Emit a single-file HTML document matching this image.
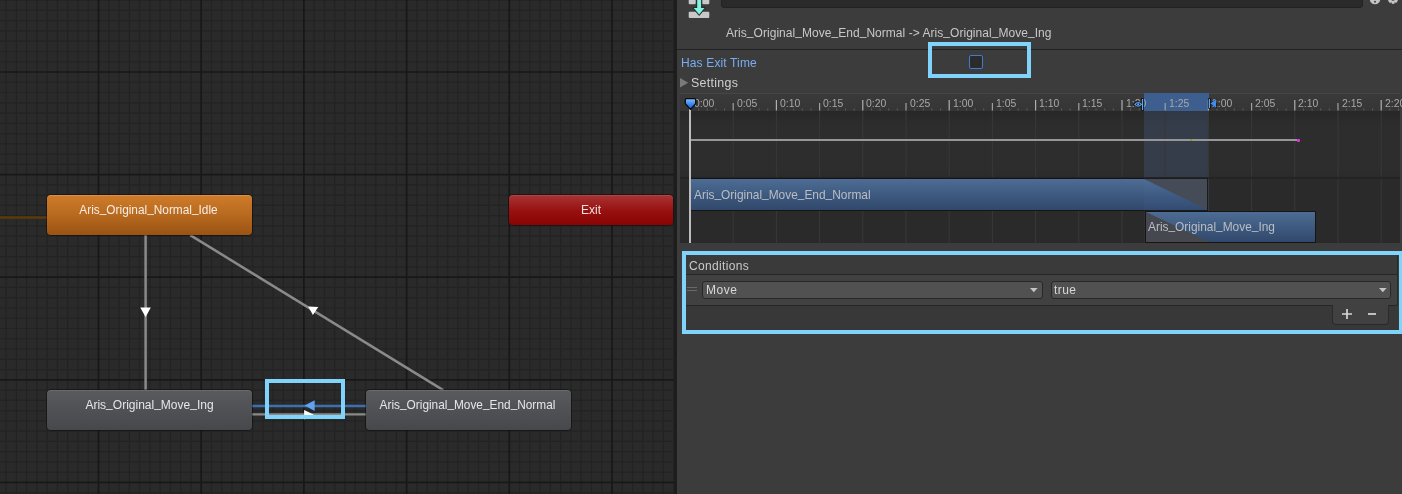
<!DOCTYPE html>
<html><head><meta charset="utf-8">
<style>
*{box-sizing:border-box;margin:0;padding:0}
html,body{width:1402px;height:494px;overflow:hidden;background:#3c3c3c;font-family:"Liberation Sans",sans-serif;}
.abs{position:absolute}
.t{position:absolute;white-space:pre;line-height:1;will-change:transform}
.u{position:relative;top:-2px}
</style></head><body>
<!-- GRAPH -->
<div class="abs" style="left:0;top:0;width:677px;height:494px;background:#2a2a2a;overflow:hidden">
<svg width="677" height="494" style="position:absolute;left:0;top:0">
<rect x="0" y="0" width="677" height="494" fill="#2a2a2a"/><path d="M6.07 0V494M16.34 0V494M26.61 0V494M36.88 0V494M47.15 0V494M57.42 0V494M67.69 0V494M77.96 0V494M88.23 0V494M108.77 0V494M119.04 0V494M129.31 0V494M139.58 0V494M149.85 0V494M160.12 0V494M170.39 0V494M180.66 0V494M190.93 0V494M211.47 0V494M221.74 0V494M232.01 0V494M242.28 0V494M252.55 0V494M262.82 0V494M273.09 0V494M283.36 0V494M293.63 0V494M314.17 0V494M324.44 0V494M334.71 0V494M344.98 0V494M355.25 0V494M365.52 0V494M375.79 0V494M386.06 0V494M396.33 0V494M416.87 0V494M427.14 0V494M437.41 0V494M447.68 0V494M457.95 0V494M468.22 0V494M478.49 0V494M488.76 0V494M499.03 0V494M519.57 0V494M529.84 0V494M540.11 0V494M550.38 0V494M560.65 0V494M570.92 0V494M581.19 0V494M591.46 0V494M601.73 0V494M622.27 0V494M632.54 0V494M642.81 0V494M653.08 0V494M663.35 0V494M673.62 0V494M0 0.18H676M0 10.44H676M0 20.70H676M0 30.96H676M0 41.22H676M0 51.48H676M0 61.74H676M0 82.26H676M0 92.52H676M0 102.78H676M0 113.04H676M0 123.30H676M0 133.56H676M0 143.82H676M0 154.08H676M0 164.34H676M0 184.86H676M0 195.12H676M0 205.38H676M0 215.64H676M0 225.90H676M0 236.16H676M0 246.42H676M0 256.68H676M0 266.94H676M0 287.46H676M0 297.72H676M0 307.98H676M0 318.24H676M0 328.50H676M0 338.76H676M0 349.02H676M0 359.28H676M0 369.54H676M0 390.06H676M0 400.32H676M0 410.58H676M0 420.84H676M0 431.10H676M0 441.36H676M0 451.62H676M0 461.88H676M0 472.14H676M0 492.66H676" stroke="#232323" stroke-width="1.2" fill="none"/><path d="M98.50 0V494M201.20 0V494M303.90 0V494M406.60 0V494M509.30 0V494M612.00 0V494M0 72.00H676M0 174.60H676M0 277.20H676M0 379.80H676M0 482.40H676" stroke="#181818" stroke-width="1.7" fill="none"/>
<!-- orange line -->
<line x1="0" y1="217.4" x2="48" y2="217.4" stroke="#5a3b08" stroke-width="2.5"/>
<!-- vertical transition -->
<line x1="145.6" y1="234" x2="145.6" y2="391" stroke="#8a8a8a" stroke-width="2.5"/>
<polygon points="140.2,307.4 150.8,307.4 145.6,317.1" fill="#ffffff"/>
<!-- diagonal -->
<line x1="190.2" y1="235.1" x2="443.2" y2="390.1" stroke="#8a8a8a" stroke-width="2.5"/>
<polygon points="308.2,306.5 318.3,307.1 312.9,314.9" fill="#ffffff"/>
<!-- blue & gray horizontal -->
<line x1="251" y1="405.9" x2="367" y2="405.9" stroke="#3f6fae" stroke-width="2.5"/>
<line x1="251" y1="414.4" x2="367" y2="414.4" stroke="#8a8a8a" stroke-width="2.3"/>
<polygon points="304.6,405.6 314.7,400.3 314.7,410.9" fill="#5fa2f0"/>
<polygon points="304.1,409.9 313.9,414.7 304.1,419.5" fill="#ffffff"/>
</svg>
<!-- nodes -->
<div class="abs" style="left:47px;top:195px;width:205px;height:40px;border-radius:4px;background:linear-gradient(#d07b29,#b76a1f 50%,#9b5313);box-shadow:0 0 0 1px rgba(0,0,0,0.35),inset 0 1px 0 rgba(255,210,150,0.25)"></div>
<div class="t" style="left:46.2px;top:205px;width:205px;text-align:center;font-size:11.85px;color:#f6eee6">Aris<span class="u">_</span>Original<span class="u">_</span>Normal<span class="u">_</span>Idle</div>
<div class="abs" style="left:509px;top:195px;width:164px;height:30px;border-radius:4px;background:linear-gradient(#a83434,#970f0f 55%,#8a0404);box-shadow:0 0 0 1px rgba(0,0,0,0.35),inset 0 1px 0 rgba(255,160,160,0.15)"></div>
<div class="t" style="left:509px;top:204px;width:164px;text-align:center;font-size:12px;color:#f0e0e0">Exit</div>
<div class="abs" style="left:47px;top:390px;width:205px;height:40px;border-radius:4px;background:linear-gradient(#595b5f,#4f5155 50%,#46484b);box-shadow:0 0 0 1px rgba(0,0,0,0.35),inset 0 1px 0 rgba(255,255,255,0.1)"></div>
<div class="t" style="left:47px;top:399px;width:205px;text-align:center;font-size:12px;color:#e6e6e6">Aris<span class="u">_</span>Original<span class="u">_</span>Move<span class="u">_</span>Ing</div>
<div class="abs" style="left:366px;top:390px;width:205px;height:40px;border-radius:4px;background:linear-gradient(#595b5f,#4f5155 50%,#46484b);box-shadow:0 0 0 1px rgba(0,0,0,0.35),inset 0 1px 0 rgba(255,255,255,0.1)"></div>
<div class="t" style="left:364.8px;top:400px;width:205px;text-align:center;font-size:11.85px;color:#e6e6e6">Aris<span class="u">_</span>Original<span class="u">_</span>Move<span class="u">_</span>End<span class="u">_</span>Normal</div>
<!-- highlight frame -->
<div class="abs" style="left:265px;top:379px;width:80px;height:40px;border:4px solid #80d4fc"></div>
</div>
<!-- divider -->
<div class="abs" style="left:674px;top:0;width:3px;height:494px;background:#1d1d1d"></div>

<!-- INSPECTOR -->
<div class="abs" style="left:677px;top:0;width:725px;height:494px;background:#3c3c3c;overflow:hidden">
<!-- header icon -->
<svg class="abs" style="left:0;top:0" width="725" height="50">
 <rect x="11.7" y="-3" width="7" height="7.2" rx="1" fill="#c8c8c8"/>
 <rect x="25.3" y="-3" width="7" height="7.2" rx="1" fill="#c8c8c8"/>
 <rect x="11.7" y="11.8" width="20.6" height="6.1" rx="1" fill="#c8c8c8"/>
 <path d="M20.2 -1 L20.2 7.9 L16.6 7.9 L22.15 14.8 L27.7 7.9 L24.1 7.9 L24.1 -1 Z" fill="none" stroke="#2a2a2a" stroke-width="1.8" stroke-linejoin="round"/>
 <path d="M20.2 -1 L20.2 7.9 L16.8 7.9 L22.15 14.6 L27.5 7.9 L24.1 7.9 L24.1 -1 Z" fill="#7ef5e2"/>
 <circle cx="698" cy="-1" r="5.3" fill="#c4c4c4"/>
 <circle cx="698" cy="1.8" r="1" fill="#444"/>
 <circle cx="716" cy="-1" r="5" fill="#c4c4c4"/>
 <circle cx="716" cy="-1" r="1.8" fill="#333"/>
 <rect x="713.5" y="2.5" width="1.2" height="2" fill="#3c3c3c"/>
 <rect x="717.5" y="2.5" width="1.2" height="2" fill="#3c3c3c"/>
</svg>
<div class="abs" style="left:44px;top:-4px;width:642px;height:11.7px;background:#2a2a2a;border:1px solid #222;border-radius:3px"></div>
<div class="t" style="left:49px;top:27px;font-size:12px;letter-spacing:0.04px;color:#c8c8c8">Aris<span class="u">_</span>Original<span class="u">_</span>Move<span class="u">_</span>End<span class="u">_</span>Normal -&gt; Aris<span class="u">_</span>Original<span class="u">_</span>Move<span class="u">_</span>Ing</div>
<div class="abs" style="left:0;top:48.5px;width:725px;height:1px;background:#222"></div>
<!-- has exit time -->
<div class="t" style="left:3.5px;top:57px;font-size:12px;letter-spacing:0.14px;color:#79acf2">Has Exit Time</div>
<div class="abs" style="left:292px;top:55px;width:14px;height:14px;border:1px solid #3b7ed0;border-radius:2px;background:#2b2b2b"></div>
<div class="abs" style="left:251px;top:42px;width:103px;height:36px;border:4px solid #80d4fc"></div>
<!-- settings -->
<svg class="abs" style="left:3px;top:77.7px" width="10" height="10"><polygon points="0,0 8.2,4.7 0,9.4" fill="#7a7a7a"/></svg>
<div class="t" style="left:13.6px;top:77px;font-size:12.4px;letter-spacing:0.3px;color:#cfcfcf">Settings</div>
<!-- timeline -->
<div class="abs" style="left:3px;top:93px;width:720px;height:150px;background:#2a2a2a;border-top:1px solid #444"></div>
<div class="abs" style="left:3px;top:110.5px;width:720px;height:67px;background:linear-gradient(#272727 0px,#2d2d2d 14px,#2d2d2d 58px,#2a2a2a 67px)"></div>
<div class="abs" style="left:3px;top:93px;width:720px;height:17.5px;background:linear-gradient(#3a3a3a,#353535);border-top:1px solid #464646"></div>
<!-- transition overlay -->
<div class="abs" style="left:467px;top:93px;width:65px;height:17.5px;background:#3d5f8f"></div>
<div class="abs" style="left:467px;top:110.5px;width:65px;height:67px;background:rgba(85,125,190,0.2)"></div>
<svg class="abs" style="left:0;top:0" width="725" height="250">
<line x1="56.20" y1="110.5" x2="56.20" y2="243" stroke="#373737" stroke-width="1.1"/>
<line x1="99.40" y1="110.5" x2="99.40" y2="243" stroke="#373737" stroke-width="1.1"/>
<line x1="142.60" y1="110.5" x2="142.60" y2="243" stroke="#373737" stroke-width="1.1"/>
<line x1="185.80" y1="110.5" x2="185.80" y2="243" stroke="#373737" stroke-width="1.1"/>
<line x1="229.00" y1="110.5" x2="229.00" y2="243" stroke="#373737" stroke-width="1.1"/>
<line x1="272.20" y1="110.5" x2="272.20" y2="243" stroke="#373737" stroke-width="1.1"/>
<line x1="315.40" y1="110.5" x2="315.40" y2="243" stroke="#373737" stroke-width="1.1"/>
<line x1="358.60" y1="110.5" x2="358.60" y2="243" stroke="#373737" stroke-width="1.1"/>
<line x1="401.80" y1="110.5" x2="401.80" y2="243" stroke="#373737" stroke-width="1.1"/>
<line x1="445.00" y1="110.5" x2="445.00" y2="243" stroke="#373737" stroke-width="1.1"/>
<line x1="488.20" y1="110.5" x2="488.20" y2="243" stroke="#373737" stroke-width="1.1"/>
<line x1="531.40" y1="110.5" x2="531.40" y2="243" stroke="#373737" stroke-width="1.1"/>
<line x1="574.60" y1="110.5" x2="574.60" y2="243" stroke="#373737" stroke-width="1.1"/>
<line x1="617.80" y1="110.5" x2="617.80" y2="243" stroke="#373737" stroke-width="1.1"/>
<line x1="661.00" y1="110.5" x2="661.00" y2="243" stroke="#373737" stroke-width="1.1"/>
<line x1="704.20" y1="110.5" x2="704.20" y2="243" stroke="#373737" stroke-width="1.1"/>
<line x1="13.00" y1="100" x2="13.00" y2="110.5" stroke="#b0b0b0" stroke-width="1.2"/>
<line x1="21.64" y1="108.3" x2="21.64" y2="110.5" stroke="#5c5c5c" stroke-width="1"/>
<line x1="30.28" y1="108.3" x2="30.28" y2="110.5" stroke="#5c5c5c" stroke-width="1"/>
<line x1="38.92" y1="108.3" x2="38.92" y2="110.5" stroke="#5c5c5c" stroke-width="1"/>
<line x1="47.56" y1="108.3" x2="47.56" y2="110.5" stroke="#5c5c5c" stroke-width="1"/>
<line x1="56.20" y1="103" x2="56.20" y2="110.5" stroke="#a0a0a0" stroke-width="1.2"/>
<line x1="64.84" y1="108.3" x2="64.84" y2="110.5" stroke="#5c5c5c" stroke-width="1"/>
<line x1="73.48" y1="108.3" x2="73.48" y2="110.5" stroke="#5c5c5c" stroke-width="1"/>
<line x1="82.12" y1="108.3" x2="82.12" y2="110.5" stroke="#5c5c5c" stroke-width="1"/>
<line x1="90.76" y1="108.3" x2="90.76" y2="110.5" stroke="#5c5c5c" stroke-width="1"/>
<line x1="99.40" y1="100" x2="99.40" y2="110.5" stroke="#b0b0b0" stroke-width="1.2"/>
<line x1="108.04" y1="108.3" x2="108.04" y2="110.5" stroke="#5c5c5c" stroke-width="1"/>
<line x1="116.68" y1="108.3" x2="116.68" y2="110.5" stroke="#5c5c5c" stroke-width="1"/>
<line x1="125.32" y1="108.3" x2="125.32" y2="110.5" stroke="#5c5c5c" stroke-width="1"/>
<line x1="133.96" y1="108.3" x2="133.96" y2="110.5" stroke="#5c5c5c" stroke-width="1"/>
<line x1="142.60" y1="103" x2="142.60" y2="110.5" stroke="#a0a0a0" stroke-width="1.2"/>
<line x1="151.24" y1="108.3" x2="151.24" y2="110.5" stroke="#5c5c5c" stroke-width="1"/>
<line x1="159.88" y1="108.3" x2="159.88" y2="110.5" stroke="#5c5c5c" stroke-width="1"/>
<line x1="168.52" y1="108.3" x2="168.52" y2="110.5" stroke="#5c5c5c" stroke-width="1"/>
<line x1="177.16" y1="108.3" x2="177.16" y2="110.5" stroke="#5c5c5c" stroke-width="1"/>
<line x1="185.80" y1="100" x2="185.80" y2="110.5" stroke="#b0b0b0" stroke-width="1.2"/>
<line x1="194.44" y1="108.3" x2="194.44" y2="110.5" stroke="#5c5c5c" stroke-width="1"/>
<line x1="203.08" y1="108.3" x2="203.08" y2="110.5" stroke="#5c5c5c" stroke-width="1"/>
<line x1="211.72" y1="108.3" x2="211.72" y2="110.5" stroke="#5c5c5c" stroke-width="1"/>
<line x1="220.36" y1="108.3" x2="220.36" y2="110.5" stroke="#5c5c5c" stroke-width="1"/>
<line x1="229.00" y1="103" x2="229.00" y2="110.5" stroke="#a0a0a0" stroke-width="1.2"/>
<line x1="237.64" y1="108.3" x2="237.64" y2="110.5" stroke="#5c5c5c" stroke-width="1"/>
<line x1="246.28" y1="108.3" x2="246.28" y2="110.5" stroke="#5c5c5c" stroke-width="1"/>
<line x1="254.92" y1="108.3" x2="254.92" y2="110.5" stroke="#5c5c5c" stroke-width="1"/>
<line x1="263.56" y1="108.3" x2="263.56" y2="110.5" stroke="#5c5c5c" stroke-width="1"/>
<line x1="272.20" y1="100" x2="272.20" y2="110.5" stroke="#b0b0b0" stroke-width="1.2"/>
<line x1="280.84" y1="108.3" x2="280.84" y2="110.5" stroke="#5c5c5c" stroke-width="1"/>
<line x1="289.48" y1="108.3" x2="289.48" y2="110.5" stroke="#5c5c5c" stroke-width="1"/>
<line x1="298.12" y1="108.3" x2="298.12" y2="110.5" stroke="#5c5c5c" stroke-width="1"/>
<line x1="306.76" y1="108.3" x2="306.76" y2="110.5" stroke="#5c5c5c" stroke-width="1"/>
<line x1="315.40" y1="103" x2="315.40" y2="110.5" stroke="#a0a0a0" stroke-width="1.2"/>
<line x1="324.04" y1="108.3" x2="324.04" y2="110.5" stroke="#5c5c5c" stroke-width="1"/>
<line x1="332.68" y1="108.3" x2="332.68" y2="110.5" stroke="#5c5c5c" stroke-width="1"/>
<line x1="341.32" y1="108.3" x2="341.32" y2="110.5" stroke="#5c5c5c" stroke-width="1"/>
<line x1="349.96" y1="108.3" x2="349.96" y2="110.5" stroke="#5c5c5c" stroke-width="1"/>
<line x1="358.60" y1="100" x2="358.60" y2="110.5" stroke="#b0b0b0" stroke-width="1.2"/>
<line x1="367.24" y1="108.3" x2="367.24" y2="110.5" stroke="#5c5c5c" stroke-width="1"/>
<line x1="375.88" y1="108.3" x2="375.88" y2="110.5" stroke="#5c5c5c" stroke-width="1"/>
<line x1="384.52" y1="108.3" x2="384.52" y2="110.5" stroke="#5c5c5c" stroke-width="1"/>
<line x1="393.16" y1="108.3" x2="393.16" y2="110.5" stroke="#5c5c5c" stroke-width="1"/>
<line x1="401.80" y1="103" x2="401.80" y2="110.5" stroke="#a0a0a0" stroke-width="1.2"/>
<line x1="410.44" y1="108.3" x2="410.44" y2="110.5" stroke="#5c5c5c" stroke-width="1"/>
<line x1="419.08" y1="108.3" x2="419.08" y2="110.5" stroke="#5c5c5c" stroke-width="1"/>
<line x1="427.72" y1="108.3" x2="427.72" y2="110.5" stroke="#5c5c5c" stroke-width="1"/>
<line x1="436.36" y1="108.3" x2="436.36" y2="110.5" stroke="#5c5c5c" stroke-width="1"/>
<line x1="445.00" y1="100" x2="445.00" y2="110.5" stroke="#b0b0b0" stroke-width="1.2"/>
<line x1="453.64" y1="108.3" x2="453.64" y2="110.5" stroke="#5c5c5c" stroke-width="1"/>
<line x1="462.28" y1="108.3" x2="462.28" y2="110.5" stroke="#5c5c5c" stroke-width="1"/>
<line x1="470.92" y1="108.3" x2="470.92" y2="110.5" stroke="#5c5c5c" stroke-width="1"/>
<line x1="479.56" y1="108.3" x2="479.56" y2="110.5" stroke="#5c5c5c" stroke-width="1"/>
<line x1="488.20" y1="103" x2="488.20" y2="110.5" stroke="#a0a0a0" stroke-width="1.2"/>
<line x1="496.84" y1="108.3" x2="496.84" y2="110.5" stroke="#5c5c5c" stroke-width="1"/>
<line x1="505.48" y1="108.3" x2="505.48" y2="110.5" stroke="#5c5c5c" stroke-width="1"/>
<line x1="514.12" y1="108.3" x2="514.12" y2="110.5" stroke="#5c5c5c" stroke-width="1"/>
<line x1="522.76" y1="108.3" x2="522.76" y2="110.5" stroke="#5c5c5c" stroke-width="1"/>
<line x1="531.40" y1="100" x2="531.40" y2="110.5" stroke="#b0b0b0" stroke-width="1.2"/>
<line x1="540.04" y1="108.3" x2="540.04" y2="110.5" stroke="#5c5c5c" stroke-width="1"/>
<line x1="548.68" y1="108.3" x2="548.68" y2="110.5" stroke="#5c5c5c" stroke-width="1"/>
<line x1="557.32" y1="108.3" x2="557.32" y2="110.5" stroke="#5c5c5c" stroke-width="1"/>
<line x1="565.96" y1="108.3" x2="565.96" y2="110.5" stroke="#5c5c5c" stroke-width="1"/>
<line x1="574.60" y1="103" x2="574.60" y2="110.5" stroke="#a0a0a0" stroke-width="1.2"/>
<line x1="583.24" y1="108.3" x2="583.24" y2="110.5" stroke="#5c5c5c" stroke-width="1"/>
<line x1="591.88" y1="108.3" x2="591.88" y2="110.5" stroke="#5c5c5c" stroke-width="1"/>
<line x1="600.52" y1="108.3" x2="600.52" y2="110.5" stroke="#5c5c5c" stroke-width="1"/>
<line x1="609.16" y1="108.3" x2="609.16" y2="110.5" stroke="#5c5c5c" stroke-width="1"/>
<line x1="617.80" y1="100" x2="617.80" y2="110.5" stroke="#b0b0b0" stroke-width="1.2"/>
<line x1="626.44" y1="108.3" x2="626.44" y2="110.5" stroke="#5c5c5c" stroke-width="1"/>
<line x1="635.08" y1="108.3" x2="635.08" y2="110.5" stroke="#5c5c5c" stroke-width="1"/>
<line x1="643.72" y1="108.3" x2="643.72" y2="110.5" stroke="#5c5c5c" stroke-width="1"/>
<line x1="652.36" y1="108.3" x2="652.36" y2="110.5" stroke="#5c5c5c" stroke-width="1"/>
<line x1="661.00" y1="103" x2="661.00" y2="110.5" stroke="#a0a0a0" stroke-width="1.2"/>
<line x1="669.64" y1="108.3" x2="669.64" y2="110.5" stroke="#5c5c5c" stroke-width="1"/>
<line x1="678.28" y1="108.3" x2="678.28" y2="110.5" stroke="#5c5c5c" stroke-width="1"/>
<line x1="686.92" y1="108.3" x2="686.92" y2="110.5" stroke="#5c5c5c" stroke-width="1"/>
<line x1="695.56" y1="108.3" x2="695.56" y2="110.5" stroke="#5c5c5c" stroke-width="1"/>
<line x1="704.20" y1="100" x2="704.20" y2="110.5" stroke="#b0b0b0" stroke-width="1.2"/>
<line x1="712.84" y1="108.3" x2="712.84" y2="110.5" stroke="#5c5c5c" stroke-width="1"/>
<line x1="721.48" y1="108.3" x2="721.48" y2="110.5" stroke="#5c5c5c" stroke-width="1"/>
</svg>
<div class="t" style="left:16.60px;top:99px;font-size:10.4px;color:#a8a8a8">0:00</div>
<div class="t" style="left:59.80px;top:99px;font-size:10.4px;color:#a8a8a8">0:05</div>
<div class="t" style="left:103.00px;top:99px;font-size:10.4px;color:#a8a8a8">0:10</div>
<div class="t" style="left:146.20px;top:99px;font-size:10.4px;color:#a8a8a8">0:15</div>
<div class="t" style="left:189.40px;top:99px;font-size:10.4px;color:#a8a8a8">0:20</div>
<div class="t" style="left:232.60px;top:99px;font-size:10.4px;color:#a8a8a8">0:25</div>
<div class="t" style="left:275.80px;top:99px;font-size:10.4px;color:#a8a8a8">1:00</div>
<div class="t" style="left:319.00px;top:99px;font-size:10.4px;color:#a8a8a8">1:05</div>
<div class="t" style="left:362.20px;top:99px;font-size:10.4px;color:#a8a8a8">1:10</div>
<div class="t" style="left:405.40px;top:99px;font-size:10.4px;color:#a8a8a8">1:15</div>
<div class="t" style="left:448.60px;top:99px;font-size:10.4px;color:#a8a8a8">1:20</div>
<div class="t" style="left:491.80px;top:99px;font-size:10.4px;color:#a8a8a8">1:25</div>
<div class="t" style="left:535.00px;top:99px;font-size:10.4px;color:#a8a8a8">2:00</div>
<div class="t" style="left:578.20px;top:99px;font-size:10.4px;color:#a8a8a8">2:05</div>
<div class="t" style="left:621.40px;top:99px;font-size:10.4px;color:#a8a8a8">2:10</div>
<div class="t" style="left:664.60px;top:99px;font-size:10.4px;color:#a8a8a8">2:15</div>
<div class="t" style="left:707.80px;top:99px;font-size:10.4px;color:#a8a8a8">2:20</div>
<!-- upper track sep -->
<div class="abs" style="left:3px;top:177px;width:720px;height:1.5px;background:#242424"></div>
<!-- curve line -->
<div class="abs" style="left:13px;top:139.2px;width:607px;height:1.7px;background:#979797"></div>
<div class="abs" style="left:620px;top:139px;width:3px;height:2.5px;background:#e030e0;border-radius:1px"></div>
<div class="abs" style="left:513px;top:139px;width:2px;height:2px;background:#9a9a10"></div>
<!-- clips -->
<div class="abs" style="left:13.5px;top:178px;width:517px;height:32.5px;background:linear-gradient(#4e6c94,#3e5a80 50%,#31486b);border:1px solid #151515;border-left:none"></div>
<svg class="abs" style="left:467px;top:179px" width="64" height="31"><polygon points="0,0 63,0 63,30.5" fill="#45494f"/></svg>
<div class="abs" style="left:467px;top:177.5px;width:65px;height:65.5px;background:rgba(90,130,200,0.07)"></div>
<div class="t" style="left:16.6px;top:190px;font-size:11.9px;color:#babec3">Aris<span class="u">_</span>Original<span class="u">_</span>Move<span class="u">_</span>End<span class="u">_</span>Normal</div>
<div class="abs" style="left:467.5px;top:210.5px;width:171.5px;height:32px;background:linear-gradient(#4e6c94,#3e5a80 50%,#31486b);border:1px solid #151515"></div>
<svg class="abs" style="left:468.5px;top:211.5px" width="64" height="31"><polygon points="0,0 63,30 0,30" fill="#45494f"/></svg>
<div class="t" style="left:470.8px;top:222px;font-size:11.9px;color:#babec3">Aris<span class="u">_</span>Original<span class="u">_</span>Move<span class="u">_</span>Ing</div>
<!-- playhead -->
<div class="abs" style="left:12px;top:109px;width:2.2px;height:134px;background:#bdbdbd"></div>
<svg class="abs" style="left:6px;top:96px" width="16" height="17"><defs><linearGradient id="phg" x1="0" y1="0" x2="0" y2="1"><stop offset="0" stop-color="#8cc0fa"/><stop offset="0.5" stop-color="#3a88f0"/><stop offset="1" stop-color="#0f62e0"/></linearGradient></defs><path d="M2.3 4 Q2.3 2.7 3.6 2.7 L11.4 2.7 Q12.7 2.7 12.7 4 L12.7 7.6 L7.5 13.4 L2.3 7.6 Z" fill="url(#phg)" stroke="#0a0a0a" stroke-width="1.3" stroke-linejoin="round"/></svg>
<!-- markers -->
<svg class="abs" style="left:453px;top:96px" width="16" height="16"><path d="M4.9 8.3 Q8.2 4.6 11.5 8.3 Q8.2 12 4.9 8.3 Z" fill="none" stroke="#101010" stroke-width="2.6"/><rect x="11.2" y="2.2" width="2.7" height="12.5" fill="#101010"/><path d="M4.9 8.3 Q8.2 4.6 11.5 8.3 Q8.2 12 4.9 8.3 Z" fill="none" stroke="#5aa6ff" stroke-width="1.1"/><circle cx="8.2" cy="8.3" r="1" fill="#5aa6ff"/><rect x="12" y="2.9" width="1.1" height="11.1" fill="#5aa6ff"/></svg>
<svg class="abs" style="left:529px;top:96px" width="14" height="16"><rect x="2.2" y="2.3" width="2.6" height="10.4" fill="#101010"/><polygon points="3.6,7.5 10.6,2.4 10.6,12.5" fill="#101010"/><rect x="2.9" y="3" width="1.1" height="9" fill="#5aa6ff"/><polygon points="4.4,7.5 10,3.3 10,11.7" fill="#3d8ef2"/></svg>

<!-- conditions -->
<div class="abs" style="left:9px;top:255px;width:712px;height:75px;background:#383838"></div>
<div class="abs" style="left:9px;top:255px;width:712px;height:19.5px;background:#3a3a3a;border-bottom:1px solid #262626;border-right:1px solid #2a2a2a;border-radius:0 3px 0 0"></div>
<div class="abs" style="left:9px;top:274.5px;width:712px;height:31px;background:#414141;border-bottom:1px solid #262626;border-right:1px solid #2a2a2a;border-radius:0 0 3px 0"></div>
<div class="abs" style="left:654.5px;top:304.5px;width:57px;height:20px;background:#414141;border-radius:0 0 4px 4px;border:1px solid #2a2a2a;border-top:none"></div>
<div class="t" style="left:12.3px;top:260px;font-size:12px;letter-spacing:0.34px;color:#cacaca">Conditions</div>
<div class="abs" style="left:10px;top:287px;width:10px;height:1px;background:#6a6a6a"></div>
<div class="abs" style="left:10px;top:290px;width:10px;height:1px;background:#6a6a6a"></div>
<div class="abs" style="left:25.3px;top:281px;width:341px;height:17.5px;background:#515151;border:1px solid #282828;border-radius:3px"></div>
<div class="t" style="left:28.8px;top:284px;font-size:12px;letter-spacing:0.55px;color:#d8d8d8">Move</div>
<svg class="abs" style="left:353px;top:288px" width="8" height="5"><polygon points="0,0 7.6,0 3.8,4.2" fill="#c4c4c4"/></svg>
<div class="abs" style="left:373.5px;top:281px;width:340.5px;height:17.5px;background:#515151;border:1px solid #282828;border-radius:3px"></div>
<div class="t" style="left:377.2px;top:284px;font-size:12px;letter-spacing:0.4px;color:#d8d8d8">true</div>
<svg class="abs" style="left:701.5px;top:288px" width="8" height="5"><polygon points="0,0 7.6,0 3.8,4.2" fill="#c4c4c4"/></svg>
<svg class="abs" style="left:665px;top:309px" width="40" height="11"><path d="M0 5H10M5 0V10" stroke="#d6d6d6" stroke-width="1.7"/><path d="M26 5H34" stroke="#d6d6d6" stroke-width="1.7"/></svg>
<div class="abs" style="left:5px;top:251px;width:721px;height:83px;border:4px solid #80d4fc"></div>
</div>
</body></html>
